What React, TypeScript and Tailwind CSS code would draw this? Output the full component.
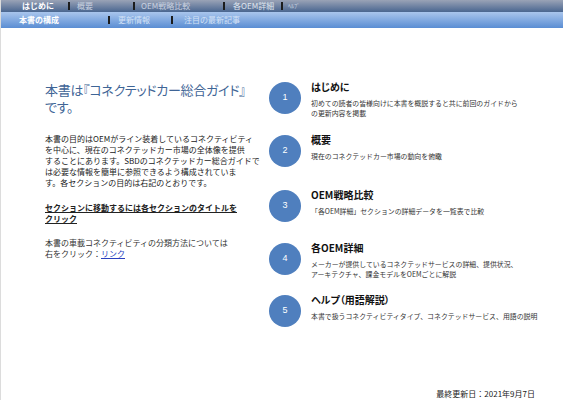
import React from "react";

const Sep = () => <div className="w-[2px] h-[8px] bg-[#1c1c1c]" />;

const items = [
  { n: "1", title: "はじめに", desc: ["初めての読者の皆様向けに本書を概説すると共に前回のガイドから", "の更新内容を掲載"], h: "h-[53px]" },
  { n: "2", title: "概要", desc: ["現在のコネクテッドカー市場の動向を俯瞰"], h: "h-[55px]" },
  { n: "3", title: "OEM戦略比較", desc: ["「各OEM詳細」セクションの詳細データを一覧表で比較"], h: "h-[53px]" },
  { n: "4", title: "各OEM詳細", desc: ["メーカーが提供しているコネクテッドサービスの詳細、提供状況、", "アーキテクチャ、課金モデルをOEMごとに解説"], h: "h-[52px]" },
  { n: "5", title: "ヘルプ（用語解説）", desc: ["本書で扱うコネクティビティタイプ、コネクテッドサービス、用語の説明"], h: "h-[40px]" },
];

export default function App() {
  return (
    <div className="h-[400px] w-[563px] flex flex-col bg-white border-l border-[#dcdcdc] [font-family:'Noto_Sans_CJK_JP','Noto_Sans',sans-serif] [font-feature-settings:'pkna'] overflow-hidden">
      {/* top nav */}
      <div className="h-[12px] flex items-center bg-gradient-to-b from-[#9aa3b6] to-[#4a6690] text-[8px] leading-[10px] pl-[21px]">
        <div className="w-[46px] text-white font-bold">はじめに</div>
        <div className="w-[9px]"><Sep /></div>
        <div className="w-[56px] text-[#c9d2e0]">概要</div>
        <div className="w-[8px]"><Sep /></div>
        <div className="w-[82px] text-[#c9d2e0]">OEM戦略比較</div>
        <div className="w-[10px]"><Sep /></div>
        <div className="w-[48px] text-[#dfe5ee]">各OEM詳細</div>
        <div className="w-[7px]"><Sep /></div>
        <div className="text-[#c9d2e0] text-[6px]">ﾍﾙﾌﾟ</div>
      </div>
      <div className="h-[16px] flex items-center bg-gradient-to-b from-[#a9c5ec] to-[#5a8dd3] text-[8px] leading-[10px] pl-[18px]">
        <div className="w-[89px] text-white font-bold">本書の構成</div>
        <div className="w-[10px]"><Sep /></div>
        <div className="w-[53px] text-[#d4e2f6]">更新情報</div>
        <div className="w-[13px]"><Sep /></div>
        <div className="text-[#d4e2f6]">注目の最新記事</div>
      </div>

      {/* main */}
      <div className="flex-1 flex pt-[54px]">
        <div className="w-[224px] ml-[44px] flex flex-col">
          <h1 className="-mt-[1px] text-[13px] leading-[17px] tracking-[-0.3px] text-[#3f6596] whitespace-nowrap [font-feature-settings:'palt']">
            本書は『コネクテッドカー総合ガイド』<br />です。
          </h1>
          <p className="mt-[18px] text-[8px] leading-[11px] text-[#222] whitespace-nowrap">
            本書の目的はOEMがライン装着しているコネクティビティ<br />
            を中心に、現在のコネクテッドカー市場の全体像を提供<br />
            することにあります。SBDのコネクテッドカー総合ガイドで<br />
            は必要な情報を簡単に参照できるよう構成されていま<br />
            す。各セクションの目的は右記のとおりです。
          </p>
          <p className="mt-[14px] text-[8px] leading-[11px] font-bold text-[#222] underline whitespace-nowrap">
            セクションに移動するには各セクションのタイトルを<br />クリック
          </p>
          <p className="mt-[13px] text-[8px] leading-[11px] text-[#333] whitespace-nowrap">
            本書の車載コネクティビティの分類方法については<br />
            右をクリック：<span className="text-[#2a3fbf] underline">リンク</span>
          </p>
        </div>

        <div className="flex flex-col">
          {items.map((it) => (
            <div key={it.n} className={`flex gap-[10px] ${it.h}`}>
              <div className="w-[32px] h-[32px] shrink-0 rounded-full bg-[#4f7fbe] flex items-center justify-center text-white text-[9px] [font-family:'Liberation_Sans',sans-serif]">
                {it.n}
              </div>
              <div className="-mt-[1px]">
                <div className="text-[10px] leading-[12px] font-bold text-[#111] whitespace-nowrap [font-feature-settings:'palt']">{it.title}</div>
                <div className="mt-[5px] text-[6.9px] leading-[10px] text-[#333] whitespace-nowrap">
                  {it.desc.map((d, i) => (
                    <div key={i}>{d}</div>
                  ))}
                </div>
              </div>
            </div>
          ))}
        </div>
      </div>

      <div className="flex justify-end pr-[28px] pb-[1px] text-[8px] leading-[10px] text-[#222]">
        最終更新日：2021年9月7日
      </div>
    </div>
  );
}
